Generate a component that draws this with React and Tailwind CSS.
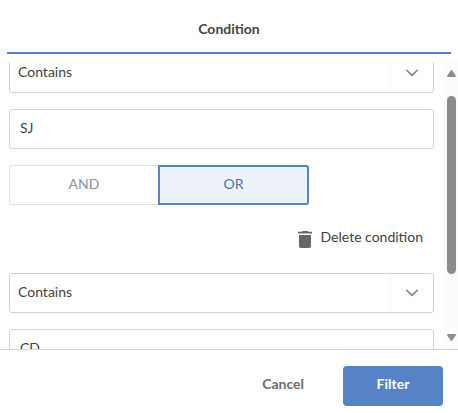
function Chevron() {
  return (
    <svg width="12" height="8" viewBox="0 0 12 8" fill="none" stroke="#7b818b" strokeWidth="1.5" strokeLinecap="round" strokeLinejoin="round">
      <path d="M0.7 1.2 L6 6.4 L11.3 1.2" />
    </svg>
  );
}

function SelectField({ value }) {
  return (
    <div className="flex h-10 w-[425px] shrink-0 rounded-[3px] border border-[#cfd1d6]">
      <div className="flex-1 rounded-br-[3px] border-r border-[#f8f8f9] pl-2 leading-[35px]">{value}</div>
      <div className="flex w-[42px] items-center justify-center">
        <Chevron />
      </div>
    </div>
  );
}

function TextField({ value }) {
  return (
    <div className="h-10 w-[425px] shrink-0 rounded-[3px] border border-[#d3d5d9] pl-[10px] leading-[35px]">{value}</div>
  );
}

function TrashIcon() {
  return (
    <svg width="14" height="17" viewBox="0 0 14 17" fill="#666666">
      <path d="M4.5 0h5l.7.8H14v1.6H0V.8h3.8z" />
      <path d="M1 4h12v11.2a1.8 1.8 0 0 1-1.8 1.8H2.8A1.8 1.8 0 0 1 1 15.2z" />
    </svg>
  );
}

function ScrollBar() {
  return (
    <div className="flex w-[14px] shrink-0 flex-col items-center bg-[#fcfcfc]">
      <svg className="mt-2 shrink-0" width="9" height="7" viewBox="0 0 9 7" fill="#8b8b8b">
        <path d="M3.8.4Q4.5-.3 5.2.4L8.8 5.8Q9 7 8 7H1Q0 7 .2 5.8z" />
      </svg>
      <div className="mt-[19px] h-[178px] w-[9px] shrink-0 rounded-full bg-[#8b8b8b]" />
      <svg className="mt-[60px] shrink-0" width="9" height="7" viewBox="0 0 9 7" fill="#8b8b8b">
        <path d="M3.8 6.6Q4.5 7.3 5.2 6.6L8.8 1.2Q9 0 8 0H1Q0 0 .2 1.2z" />
      </svg>
    </div>
  );
}

export default function App() {
  return (
    <div className="flex h-[413px] w-[458px] flex-col overflow-hidden bg-white font-[Lato,sans-serif] text-[14px] text-[#424242]">
      <header className="mx-[7px] h-[54px] shrink-0 border-b-2 border-[#5583c5] text-center font-bold leading-[58px] text-[#444444]">
        Condition
      </header>
      <main className="mt-2 flex h-[287px] shrink-0 justify-between overflow-hidden">
        <div className="-mt-[9px] flex flex-col gap-4 pl-[9px]">
          <SelectField value="Contains" />
          <TextField value="SJ" />
          <div className="flex h-10 shrink-0 text-center">
            <button className="w-[149px] rounded-l-[3px] border border-r-0 border-[#e2e3e5] pb-[4px] text-[#8e9299]">AND</button>
            <button className="w-[151px] rounded-r-[3px] border-2 border-[#5583c5] bg-[#edf2fa] pb-[4px] text-[#4d72ad]">OR</button>
          </div>
          <div className="flex h-9 shrink-0 items-center justify-end gap-[9px] pr-[11px]">
            <span className="mt-[1px]"><TrashIcon /></span>
            <span className="-mt-[5px]">Delete condition</span>
          </div>
          <SelectField value="Contains" />
          <TextField value="CD" />
        </div>
        <ScrollBar />
      </main>
      <footer className="flex flex-1 justify-end border-t border-[#d3d5d9] pr-[15px] pt-4 font-bold">
        <button className="mr-[39px] h-10 pb-[5px] text-[#6b6b6b]">Cancel</button>
        <button className="h-10 w-[100px] rounded-[4px] bg-[#5583c5] pb-[5px] text-white">Filter</button>
      </footer>
    </div>
  );
}
